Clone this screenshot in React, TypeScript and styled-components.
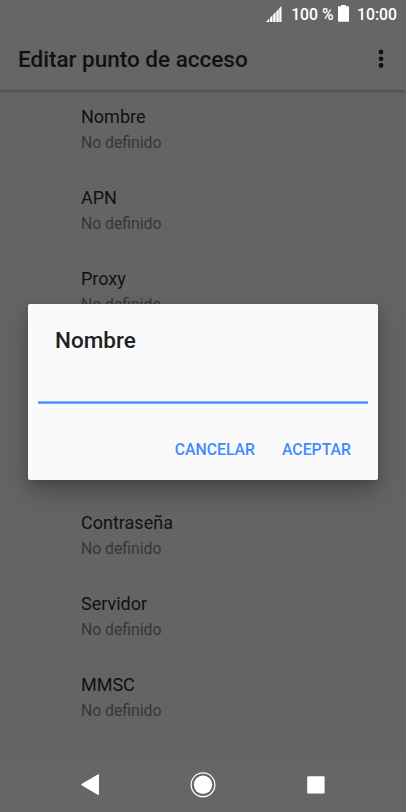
import React from "react";
import styled, { createGlobalStyle } from "styled-components";

const GlobalStyle = createGlobalStyle`
  * { box-sizing: border-box; }
  body { margin: 0; background: #646464; font-family: Roboto, "Noto Sans", sans-serif; }
  button { font: inherit; border: 0; padding: 0; background: none; }
`;

const Screen = styled.div`
  position: relative;
  display: flex;
  flex-direction: column;
  width: 406px;
  height: 812px;
  overflow: hidden;
  background: #646464;
`;

const Header = styled.header`
  flex: none;
  height: 90px;
  background: #666666;
  box-shadow: 0 1px 3px rgba(0, 0, 0, 0.3);
`;

const StatusBar = styled.div`
  display: flex;
  align-items: center;
  justify-content: flex-end;
  height: 28px;
  padding-right: 9px;
  color: #fff;
  font-size: 15.75px;
  font-weight: 500;
  line-height: 29px;
  white-space: nowrap;
`;

const SignalIcon = styled.svg`
  width: 16px;
  height: 16px;
  margin-right: 9px;
`;

const BatteryIcon = styled.svg`
  width: 11px;
  height: 17px;
  margin: 0 8px 1px 4.5px;
`;

const TitleBar = styled.div`
  display: flex;
  align-items: center;
  justify-content: space-between;
  height: 62px;
  padding: 0 16px 0 18px;
`;

const Title = styled.h1`
  margin: 0;
  color: #111;
  font-size: 22.5px;
  font-weight: 500;
  line-height: 28px;
  white-space: nowrap;
`;

const MenuButton = styled.button`
  display: flex;
  width: 18px;
  height: 24px;
  align-items: center;
  justify-content: center;
`;

const Settings = styled.main`
  flex: 1;
  padding: 14px 0 0 81px;
`;

const Setting = styled.div<{ $slots?: number }>`
  height: ${({ $slots = 1 }) => $slots * 81.2}px;
  white-space: nowrap;
`;

const SettingName = styled.div`
  color: #111;
  font-size: 18px;
  line-height: 26px;
`;

const SettingValue = styled.div`
  color: #363636;
  font-size: 15.75px;
  line-height: 25px;
`;

const NavBar = styled.nav`
  flex: none;
  display: flex;
  justify-content: center;
  align-items: center;
  gap: 85px;
  height: 54px;
  background: #666666;
`;

const NavButton = styled.button`
  display: flex;
  width: 28px;
  height: 28px;
  svg { display: block; }
`;

const Dialog = styled.section`
  position: absolute;
  left: 28px;
  top: 304px;
  display: flex;
  flex-direction: column;
  width: 350px;
  height: 176.4px;
  padding: 22px 10px 0;
  border-radius: 2px;
  background: #fafafa;
  box-shadow: 0 12px 24px rgba(0, 0, 0, 0.25), 0 4px 10px rgba(0, 0, 0, 0.12);
`;

const DialogTitle = styled.h2`
  margin: 0 0 0 17px;
  color: #212121;
  font-size: 22.5px;
  font-weight: 500;
  line-height: 28px;
`;

const TextField = styled.input`
  width: 330px;
  height: 50px;
  margin: 0;
  padding: 0;
  border: 0;
  border-radius: 0;
  outline: 0;
  background: linear-gradient(#8ab4fd 0 1px, #448aff 1px 2px, #78a9fd 2px 3px) bottom / 100% 3px no-repeat;
`;

const Actions = styled.div`
  display: flex;
  justify-content: flex-end;
  gap: 27px;
  margin-top: 34px;
  padding-right: 17px;
`;

const Action = styled.button`
  color: #448aff;
  font-size: 15.8px;
  font-weight: 500;
  line-height: 24px;
`;

const EMPTY = "No definido";

function Entry({ name }: { name: string }) {
  return (
    <Setting>
      <SettingName>{name}</SettingName>
      <SettingValue>{EMPTY}</SettingValue>
    </Setting>
  );
}

export default function App() {
  return (
    <>
      <GlobalStyle />
      <Screen>
        <Header>
          <StatusBar>
            <SignalIcon viewBox="0 0 16 16" fill="#fff">
              <path d="M0 16 3.4 12.4V16ZM4.1 16V11.8L6.5 9.3V16ZM7.2 16V8.6L9.6 6.1V16ZM10.3 16V5.4L12.7 2.9V16ZM13.2 16V2.3L15.5 0V16Z" />
            </SignalIcon>
            <span>100 %</span>
            <BatteryIcon viewBox="0 0 11 17" fill="#fff">
              <path d="M3 0H8V1.3H10.2Q11 1.3 11 2.1V15.9Q11 16.7 10.2 16.7H.8Q0 16.7 0 15.9V2.1Q0 1.3.8 1.3H3Z" />
            </BatteryIcon>
            <span>10:00</span>
          </StatusBar>
          <TitleBar>
            <Title>Editar punto de acceso</Title>
            <MenuButton aria-label="Menú">
              <svg width="6" height="20" viewBox="0 0 6 20" fill="#111">
                <circle cx="3" cy="3" r="2.4" />
                <circle cx="3" cy="9.8" r="2.4" />
                <circle cx="3" cy="16.5" r="2.4" />
              </svg>
            </MenuButton>
          </TitleBar>
        </Header>
        <Settings>
          <Entry name="Nombre" />
          <Entry name="APN" />
          <Entry name="Proxy" />
          <Setting $slots={2} />
          <Entry name="Contraseña" />
          <Entry name="Servidor" />
          <Entry name="MMSC" />
        </Settings>
        <NavBar>
          <NavButton aria-label="Atrás">
            <svg width="28" height="28" viewBox="0 0 28 28" fill="#fff">
              <path d="M5.6 13.1 21.7 3.4Q23 2.7 23 4.1V23Q23 24.4 21.7 23.7L5.6 14.3Q4.6 13.7 5.6 13.1Z" />
            </svg>
          </NavButton>
          <NavButton aria-label="Inicio">
            <svg width="28" height="28" viewBox="0 0 28 28">
              <circle cx="14" cy="13.8" r="11.9" fill="none" stroke="#fff" strokeWidth="1.2" />
              <circle cx="14" cy="13.8" r="9.2" fill="#fff" />
            </svg>
          </NavButton>
          <NavButton aria-label="Recientes">
            <svg width="28" height="28" viewBox="0 0 28 28">
              <rect x="5.2" y="5.2" width="17.4" height="17.4" rx="1" fill="#fff" />
            </svg>
          </NavButton>
        </NavBar>
        <Dialog>
          <DialogTitle>Nombre</DialogTitle>
          <TextField aria-label="Nombre" />
          <Actions>
            <Action>CANCELAR</Action>
            <Action>ACEPTAR</Action>
          </Actions>
        </Dialog>
      </Screen>
    </>
  );
}
